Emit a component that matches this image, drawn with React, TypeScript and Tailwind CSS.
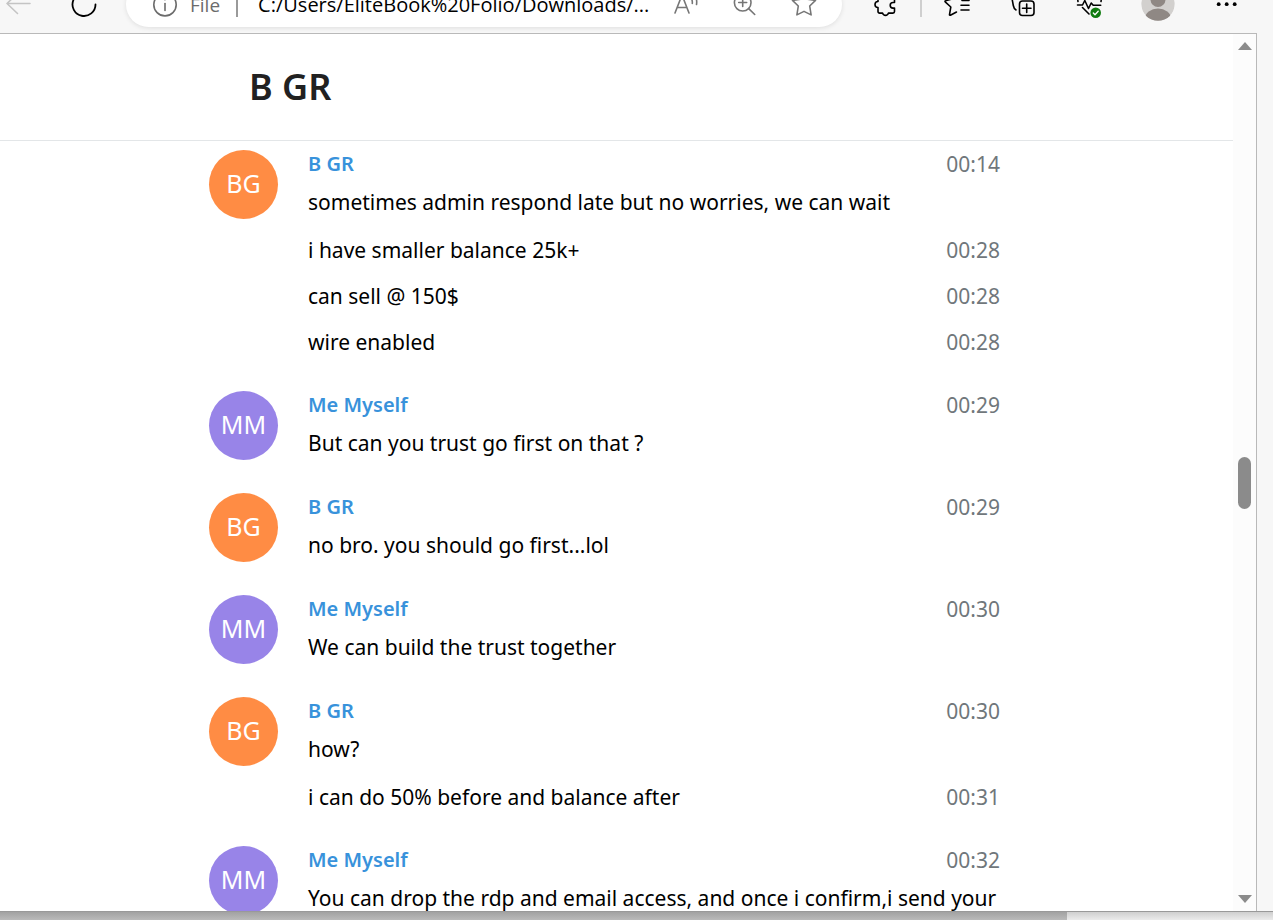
import type { ReactNode } from "react";

type Line = { text: string; time?: string };

type Group = {
  name: string;
  initials: string;
  color: string;
  time: string;
  lines: Line[];
};

const ORANGE = "bg-[#ff8c44]";
const PURPLE = "bg-[#9884e8]";

const GROUPS: Group[] = [
  {
    name: "B GR",
    initials: "BG",
    color: ORANGE,
    time: "00:14",
    lines: [
      { text: "sometimes admin respond late but no worries, we can wait" },
      { text: "i have smaller balance 25k+", time: "00:28" },
      { text: "can sell @ 150$", time: "00:28" },
      { text: "wire enabled", time: "00:28" },
    ],
  },
  {
    name: "Me Myself",
    initials: "MM",
    color: PURPLE,
    time: "00:29",
    lines: [{ text: "But can you trust go first on that ?" }],
  },
  {
    name: "B GR",
    initials: "BG",
    color: ORANGE,
    time: "00:29",
    lines: [{ text: "no bro. you should go first...lol" }],
  },
  {
    name: "Me Myself",
    initials: "MM",
    color: PURPLE,
    time: "00:30",
    lines: [{ text: "We can build the trust together" }],
  },
  {
    name: "B GR",
    initials: "BG",
    color: ORANGE,
    time: "00:30",
    lines: [{ text: "how?" }, { text: "i can do 50% before and balance after", time: "00:31" }],
  },
  {
    name: "Me Myself",
    initials: "MM",
    color: PURPLE,
    time: "00:32",
    lines: [{ text: "You can drop the rdp and email access, and once i confirm,i send your" }],
  },
];

function IconButton({
  label,
  viewBox,
  className = "text-black",
  children,
}: {
  label: string;
  viewBox: string;
  className?: string;
  children: ReactNode;
}) {
  return (
    <button type="button" aria-label={label} className={`shrink-0 ${className}`}>
      <svg
        viewBox={viewBox}
        className="h-[33px] w-[34px]"
        fill="none"
        stroke="currentColor"
        strokeWidth="1.6"
        strokeLinecap="round"
        strokeLinejoin="round"
      >
        {children}
      </svg>
    </button>
  );
}

function AddressBar() {
  return (
    <div className="flex h-[45px] min-w-0 flex-1 items-center rounded-full bg-white pr-[21px] pl-[22px] shadow-[0_1px_5px_rgba(0,0,0,0.1)]">
      <IconButton label="Site information" viewBox="148 -12 34 33" className="text-[#6b6b6b]">
        <circle cx="165" cy="4.7" r="11.2" />
        <path d="M165 3.5v7" />
        <circle cx="165" cy="-1" r="0.6" />
      </IconButton>
      <label htmlFor="address" className="ml-2 text-[19px] leading-7 text-[#6b6b6b]">
        File
      </label>
      <span className="ml-4 h-[24px] w-[2px] bg-[#9a9a9a]" />
      <input
        id="address"
        type="text"
        readOnly
        value="C:/Users/EliteBook%20Folio/Downloads/..."
        className="ml-5 h-7 min-w-0 flex-1 bg-transparent text-[20px] leading-7 text-black outline-none"
      />
      <div className="flex gap-[25px]">
        <IconButton label="Read aloud" viewBox="668 -12 34 33" className="text-[#767676]">
          <path d="M674 13l7-18 7 18M676.5 7.5h9" />
          <path d="M690-2.500q1.600 3 1.300 6M694.500-3.500q1.700 4 1 8" />
        </IconButton>
        <IconButton label="Zoom" viewBox="727 -12 34 33" className="text-[#767676]">
          <circle cx="741.700" cy="2.700" r="8.300" />
          <path d="M747.700 8.700l6 5.800M741.700-1.500v8M737.700 2.500h8" />
        </IconButton>
        <IconButton label="Add to favorites" viewBox="787 -12 34 33" className="text-[#767676]">
          <path d="M804-8l3.500 7.300 8 1.100-5.800 5.600 1.400 8.900-7.100-3.500-7.100 3.500 1.400-8.900-5.800-5.600 8-1.100z" />
        </IconButton>
      </div>
    </div>
  );
}

function Toolbar() {
  return (
    <header className="flex h-[33px] shrink-0 flex-col justify-end overflow-hidden bg-[#f7f7f7] pb-[6px] font-['Open_Sans',sans-serif]">
      <div className="flex h-[45px] shrink-0 items-center pr-[31px]">
        <IconButton label="Back" viewBox="0 -12 34 33" className="text-[#c4c4c4]">
          <path d="M30 3.500H7M17.500-6.500l-10.500 10 10.500 10" />
        </IconButton>
        <div className="ml-[33px] mr-[25px] flex">
          <IconButton label="Refresh" viewBox="67 -12 34 33" className="text-black">
            <path d="M95.500 4.500a11.500 11.500 0 1 1-5-9.500M91-10v5.500h-5.500" strokeWidth="1.800" />
          </IconButton>
        </div>
        <AddressBar />
        <div className="ml-[26px] flex items-center">
          <IconButton label="Extensions" viewBox="868 -12 34 33">
            <path d="M894.500-5v7.500h-1.500a2.800 2.800 0 0 0 0 5.600h1.500v3.400a1.600 1.600 0 0 1-1.600 1.600h-4.500a3 3 0 0 1-5.800 0h-3a1.600 1.600 0 0 1-1.600-1.600v-4a3 3 0 0 1 0-6v-6.500z" />
          </IconButton>
          <span className="mx-[18px] h-[24px] w-[2px] bg-[#cfcfcf]" />
          <div className="flex items-center gap-[33px]">
            <IconButton label="Favorites" viewBox="940 -12 34 33">
              <path d="M960.500-1h-1.500l-3.500-7-3.500 7-6.500 1.800a.6.600 0 0 0-.3 1l5.600 5.200-1.300 7.600a.6.600 0 0 0 .9.600l6.100-3.200" />
              <path d="M962 .5h7M961 5.200h8M961 10h8" />
            </IconButton>
            <IconButton label="Collections" viewBox="1007 -12 34 33">
              <rect x="1019.500" y="1" width="14.500" height="14.500" rx="3" />
              <path d="M1026.700 4v8.500M1022.500 8.300h8.500M1016 10q-2-1-2.700-4.500l-1.300-7" />
            </IconButton>
            <IconButton label="Browser essentials" viewBox="1074 -12 34 33">
              <path d="M1078 1.500q-1-5 3-7.500t9 2q4-4.500 8-2t3 7.500" />
              <path d="M1077.500 5h5l2.300-4.500 3.700 8 2.700-5.500 2 2.200h7.500M1082.500 7.500l6.500 6.500" />
              <circle cx="1095.700" cy="12.800" r="5.300" fill="#107c10" stroke="none" />
              <path d="M1093.300 13l1.700 1.700 3.200-3.400" stroke="#fff" strokeWidth="1.300" />
            </IconButton>
            <IconButton label="Profile" viewBox="1141 -12 34 33">
              <clipPath id="profile-clip">
                <circle cx="1158" cy="4" r="16.800" />
              </clipPath>
              <g clipPath="url(#profile-clip)" stroke="none">
                <circle cx="1158" cy="4" r="16.800" fill="#d2d0ce" />
                <circle cx="1158" cy="-0.500" r="7.500" fill="#8f8884" />
                <ellipse cx="1158" cy="18.500" rx="13" ry="10" fill="#8f8884" />
              </g>
            </IconButton>
            <IconButton label="Settings and more" viewBox="1208 -12 34 33">
              <g fill="currentColor" stroke="none">
                <circle cx="1218.700" cy="4.200" r="1.900" />
                <circle cx="1226.700" cy="4.200" r="1.900" />
                <circle cx="1234.700" cy="4.200" r="1.900" />
              </g>
            </IconButton>
          </div>
        </div>
      </div>
    </header>
  );
}

function MessageGroup({ group }: { group: Group }) {
  const [first, ...joined] = group.lines;

  return (
    <article className="flex gap-[30px]">
      <div
        className={`flex size-[69px] shrink-0 items-center justify-center rounded-full pb-1 text-[25px] leading-7 text-white ${group.color}`}
      >
        {group.initials}
      </div>
      <div className="min-w-0 flex-1 pb-[2px]">
        <div className="flex justify-between">
          <h2 className="text-[20px] leading-7 font-semibold text-[#3892db]">{group.name}</h2>
          <time className="text-[#70777b]">{group.time}</time>
        </div>
        <p className="mt-[10px] whitespace-nowrap">{first.text}</p>
        {joined.length > 0 && (
          <div className="mt-5 space-y-[18px]">
            {joined.map((line) => (
              <div key={line.text} className="flex justify-between">
                <p>{line.text}</p>
                <time className="text-[#70777b]">{line.time}</time>
              </div>
            ))}
          </div>
        )}
      </div>
    </article>
  );
}

function VerticalScrollbar() {
  return (
    <div className="flex w-[24px] shrink-0 flex-col items-center border-r border-[#b9b9b9] bg-[#fcfcfc] py-2 text-[#8b8b8b]">
      <button type="button" aria-label="Scroll up">
        <svg viewBox="0 0 14 8" className="h-2 w-[14px]" fill="currentColor">
          <path d="M7 0l7 8H0z" />
        </svg>
      </button>
      <div className="flex w-full flex-1 flex-col items-center">
        <span className="grow-[407]" />
        <span className="h-[52px] w-[13px] rounded-full bg-[#8b8b8b]" />
        <span className="grow-[386]" />
      </div>
      <button type="button" aria-label="Scroll down">
        <svg viewBox="0 0 14 8" className="h-2 w-[14px]" fill="currentColor">
          <path d="M7 8l7-8H0z" />
        </svg>
      </button>
    </div>
  );
}

export default function App() {
  return (
    <div className="flex h-screen flex-col overflow-hidden bg-[#f7f7f7]">
      <Toolbar />
      <div className="mr-4 flex min-h-0 flex-1 border-t border-[#b9b9b9] bg-white">
        <main className="min-w-0 flex-1 overflow-hidden font-['Noto_Sans',sans-serif] text-[21px] leading-7 text-black">
          <div className="border-b border-[#e3e6e8]">
            <div className="mx-auto flex h-[106px] max-w-[815px] items-center pl-10">
              <h1 className="text-[36px] leading-[48px] font-semibold text-[#212121]">B GR</h1>
            </div>
          </div>
          <div className="mx-auto flex max-w-[815px] flex-col gap-[33px] pt-[9px] pr-6">
            {GROUPS.map((group, i) => (
              <MessageGroup key={i} group={group} />
            ))}
          </div>
        </main>
        <VerticalScrollbar />
      </div>
      <div className="flex h-[9px] shrink-0 border-t border-[#999999]">
        <div className="w-[1067px] bg-linear-to-b from-[#a2a2a2] to-[#bababa]" />
        <div className="flex-1 bg-linear-to-b from-[#cfcfcf] to-[#ebebeb]" />
      </div>
    </div>
  );
}
